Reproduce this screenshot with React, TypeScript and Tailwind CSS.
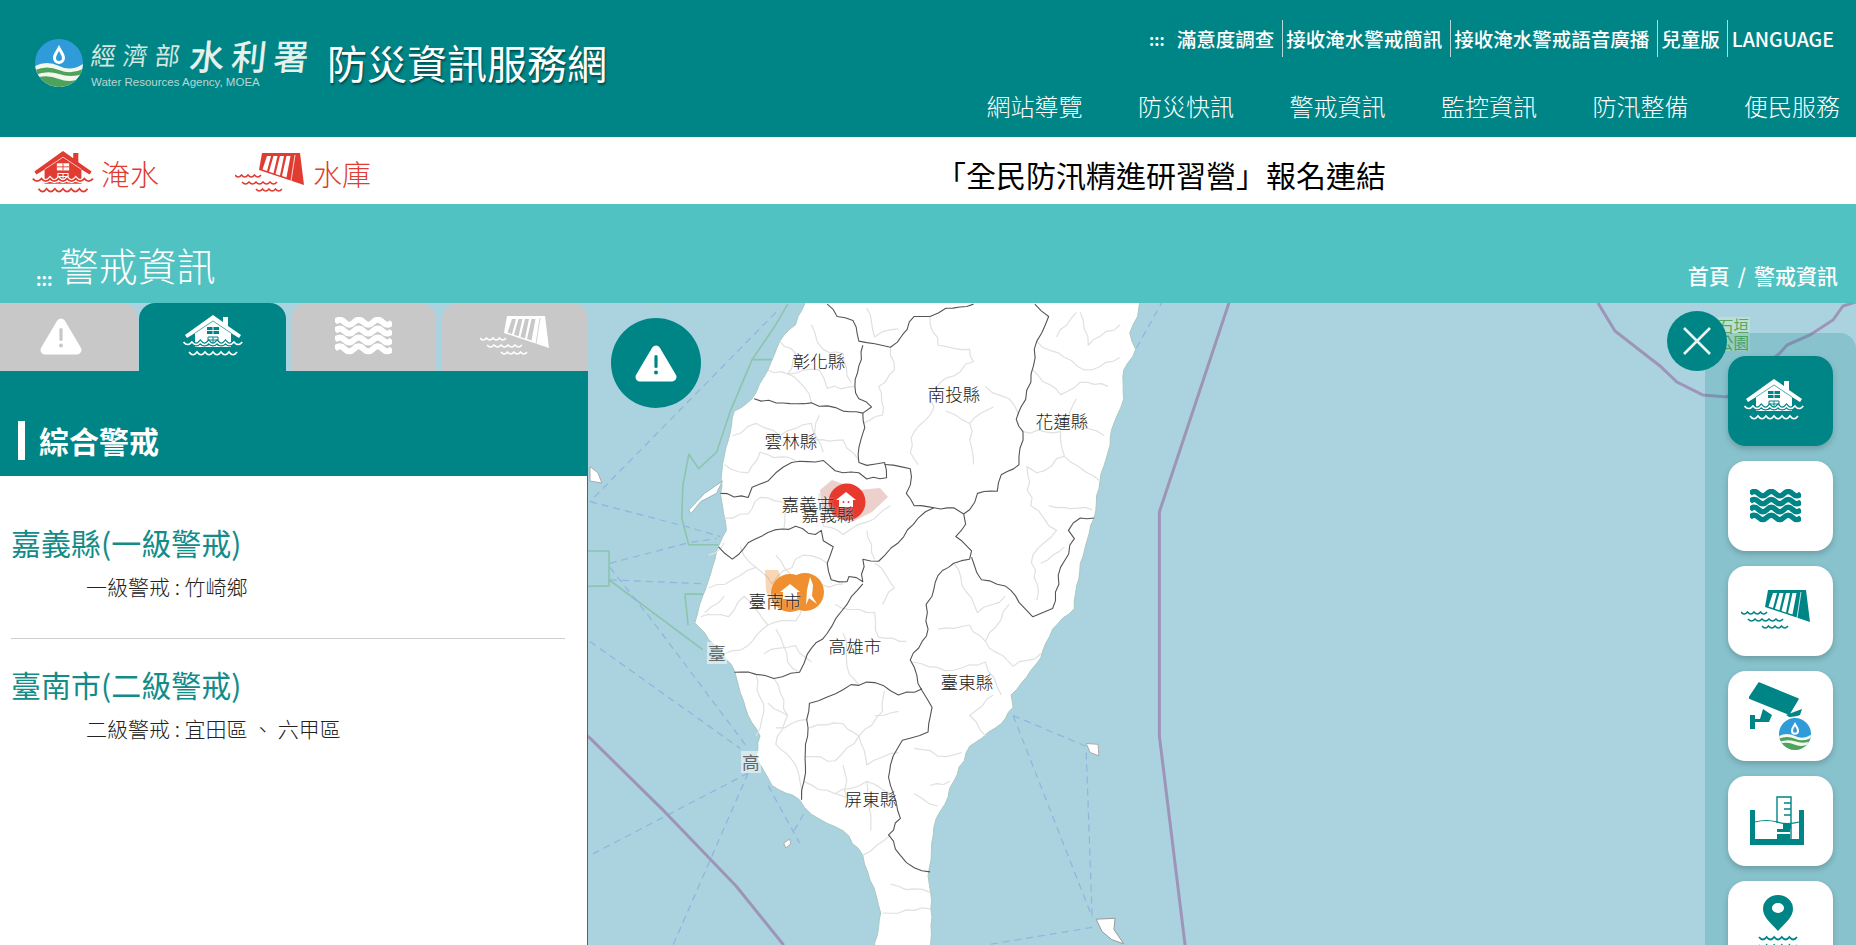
import { ReactNode } from "react";

const TEAL = "#008587";

// 波浪 path
const scallop = (x: number, y: number, n: number, w: number, d = 4) =>
  `M${x} ${y}` + Array.from({ length: n }, () => ` q${w / 2} ${d} ${w} 0`).join("");

// 把直線折成比較像行政界線的鋸齒
const wiggle = (d: string, amp = 4) => {
  let out = "";
  let px = 0;
  let py = 0;
  let seed = d.length;
  for (const m of d.matchAll(/([ML])(-?\d+) (-?\d+)/g)) {
    const x = Number(m[2]);
    const y = Number(m[3]);
    if (m[1] === "L") {
      const len = Math.hypot(x - px, y - py);
      const n = Math.max(1, Math.round(len / 20));
      for (let i = 1; i < n; i++) {
        seed += 1;
        const off = Math.sin(seed * 12.9898) * 43758.5453;
        const r = (off - Math.floor(off) - 0.5) * 2 * amp;
        const t = i / n;
        const ox = px + (x - px) * t + (-(y - py) / len) * r;
        const oy = py + (y - py) * t + ((x - px) / len) * r;
        out += ` L${ox.toFixed(1)} ${oy.toFixed(1)}`;
      }
    }
    out += ` ${m[1]}${x} ${y}`;
    px = x;
    py = y;
  }
  return d.trim().endsWith("Z") ? out + " Z" : out;
};

function HouseFlood({ bg, className }: { bg: string; className?: string }) {
  return (
    <svg viewBox="0 0 60 45" className={className} fill="none">
      <path d="M30 0 L40 7 V2 H45 V11 L58 20 L56 23 L48 18 V32 H12 V18 L4 23 L2 20 Z" fill="currentColor" />
      <path d="M12 18 L30 6 L48 18" stroke={bg} strokeWidth="0.7" />
      <rect x="24" y="12" width="12" height="7" fill={bg} />
      <path d="M30 12 V19 M24 15.5 H36" stroke="currentColor" strokeWidth="0.9" />
      <path d="M25 31 V22 H35 V31 M25 25 H35 M30 22 V31" stroke={bg} strokeWidth="1" />
      <path d={scallop(0.5, 27, 7, 8.4, 5)} stroke={bg} strokeWidth="4" />
      <path d={scallop(0.5, 27, 7, 8.4, 5)} stroke="currentColor" strokeWidth="1.7" />
      <path d={scallop(6, 37, 6, 8, 5.5)} stroke="currentColor" strokeWidth="1.7" />
    </svg>
  );
}

function Waves({ className }: { className?: string }) {
  return (
    <svg viewBox="0 0 58 38" className={className} fill="none" stroke="currentColor" strokeWidth="6.2">
      {[5, 14, 23, 32].map((y) => (
        <path key={y} d={`M0 ${y} q4.8 -5 9.67 0 t9.67 0 t9.67 0 t9.67 0 t9.67 0 t9.67 0`} />
      ))}
    </svg>
  );
}

function Dam({ bg, className }: { bg: string; className?: string }) {
  return (
    <svg viewBox="0 0 70 42" className={className} fill="none">
      <path d="M27 0 H65 L69 32 L24 17 Z" fill="currentColor" />
      {[0, 1, 2, 3].map((i) => (
        <path key={i} d={`M${32 + i * 6.5} 3 h4 l-4 ${15 + i * 2.2} l-4.5 -1.5 Z`} fill={bg} />
      ))}
      <path d="M60 2 L56 28" stroke={bg} strokeWidth="0.8" />
      <path d={scallop(0, 22, 4, 6.5, 4)} stroke="currentColor" strokeWidth="1.5" />
      <path d={scallop(7, 29, 5, 7, 4)} stroke="currentColor" strokeWidth="1.5" />
      <path d={scallop(21, 36, 4, 6.5, 4)} stroke="currentColor" strokeWidth="1.5" />
    </svg>
  );
}

function WraLogo({ id, className }: { id: string; className?: string }) {
  return (
    <svg viewBox="0 0 48 48" className={className}>
      <clipPath id={id}>
        <circle cx="24" cy="24" r="24" />
      </clipPath>
      <g clipPath={`url(#${id})`}>
        <rect width="48" height="48" fill="#2f9bd8" />
        <path d="M0 27 Q12 21 24 27 T48 25 V48 H0 Z" fill="#f3f7ee" />
        <path d="M0 31 Q12 26 24 31 T48 30 V35 Q36 39 24 35 T0 36 Z" fill="#4da25c" />
        <path d="M0 39 Q12 35 24 40 T48 38 V48 H0 Z" fill="#4da25c" />
      </g>
      <path d="M24 6 C27 12 30 15 30 19 A6 6 0 0 1 18 19 C18 15 21 12 24 6 Z" fill="#fff" />
      <path d="M24 12 C25.5 15 27 17 27 19 A3 3 0 0 1 21 19 C21 17 22.5 15 24 12 Z" fill="#2f9bd8" />
    </svg>
  );
}

function Camera({ className }: { className?: string }) {
  return (
    <svg viewBox="0 0 64 68" className={className} fill="currentColor">
      <path d="M0 16 L10 1 L49 17 L40 32 Z" stroke="currentColor" strokeWidth="1.5" strokeLinejoin="round" />
      <path d="M37 33 L53 27 L51 33 L42 36 Z" />
      <path d="M14 27 L23 33 L20 40 H6 V37 H11 Z" />
      <rect x="1" y="33" width="5" height="14" />
      <circle cx="46" cy="52" r="17.5" fill="#fff" />
      <g transform="translate(30 36)">
        <WraLogo id="cam-logo" className="w-[32px] h-[32px]" />
      </g>
    </svg>
  );
}

function Gauge({ className }: { className?: string }) {
  return (
    <svg viewBox="0 0 54 50" className={className} fill="none">
      <path d="M0 14 H5 V43 H49 V14 H54 V49 H0 Z" fill="currentColor" />
      <path d="M27 27 V1 H41 V43" stroke="currentColor" strokeWidth="1.4" />
      <path d="M34 7 H41 M34 13 H41 M34 19 H41" stroke="currentColor" strokeWidth="1.4" />
      <path d="M5 26 q11 -3 22 0 t22 0" stroke="currentColor" strokeWidth="1.2" />
      <path d="M27 33 H40 V36 H27 Z M27 38 H40 V43 H27 Z M33 28 H41 V33 H33 Z" fill="currentColor" />
    </svg>
  );
}

function PinWater({ className }: { className?: string }) {
  return (
    <svg viewBox="0 0 40 62" className={className} fill="none">
      <path
        fillRule="evenodd"
        d="M20 36 C12 27 5 22 5 14 A15 14 0 0 1 35 14 C35 22 28 27 20 36 Z M20 8 A6 5 0 1 0 20 18 A6 5 0 1 0 20 8 Z"
        fill="currentColor"
      />
      <path d={scallop(1, 42, 5, 7.6, 5)} stroke="currentColor" strokeWidth="1.8" />
      <path d={scallop(1, 50, 5, 7.6, 5)} stroke="currentColor" strokeWidth="1.8" />
    </svg>
  );
}

function AlertIcon({ bg, className }: { bg: string; className?: string }) {
  return (
    <svg viewBox="0 0 42 37" className={className}>
      <path d="M21 5 L37 32 H5 Z" fill="currentColor" stroke="currentColor" strokeWidth="9" strokeLinejoin="round" />
      <rect x="19.4" y="10" width="3.2" height="13" rx="1.6" fill={bg} />
      <circle cx="21" cy="27.5" r="2" fill={bg} />
    </svg>
  );
}

// 地圖座標是以地圖裁切範圍為準，下面再縮放回頁面像素
const COAST =
  "M1390 5 L1385 40 L1365 80 L1380 120 L1350 170 L1350 240 L1325 300 L1310 370 L1290 440 L1275 530 L1240 640 L1225 750 L1170 800 L1140 870 L1065 960 L1070 990 L1040 1030 L960 1085 L920 1170 L870 1280 L855 1400 L865 1500 L860 1580 L720 1580 L735 1490 L690 1350 L640 1290 L560 1250 L530 1215 L460 1180 L420 1110 L430 1060 L400 1010 L365 900 L335 860 L300 825 L265 785 L285 720 L320 610 L345 560 L335 500 L330 470 L335 400 L350 340 L365 270 L410 240 L450 170 L480 100 L520 60 L545 5 Z";

const COUNTY = [
  "M600 10 L625 40 L665 50 L680 100 L760 115 L790 85 L820 40 L860 40 L900 20 L970 10",
  "M1125 10 L1160 40 L1130 100 L1115 200 L1090 260 L1078 290 L1095 320 L1085 400 L1040 425 L1030 465 L980 470 L960 510 L945 520",
  "M415 240 L470 250 L560 250 L640 270 L690 275 L712 260 L680 240 L670 210 L680 160 L690 110",
  "M690 275 L695 310 L685 340 L680 395 L700 402 L745 395 L750 432 L700 435 L680 420 L620 415 L590 390 L510 395 L470 420 L450 440 L410 455 L400 480 L330 470",
  "M745 400 L810 410 L810 450 L800 470 L820 500 L870 505 L920 505 L945 520 L950 545 L925 575 L965 610 L960 630 L920 640 L880 670 L865 720 L850 740 L855 800 L840 830 L810 875 L840 950 L865 990 L855 1050 L790 1070 L760 1130 L755 1160 L785 1260 L755 1300 L785 1350 L820 1380 L860 1390",
  "M325 600 L360 630 L400 590 L450 565 L520 550 L570 570 L585 560 L590 585 L615 600 L600 640 L610 680 L650 685 L655 672 L690 685 L690 630 L730 635 L780 590 L830 530 L870 505",
  "M365 905 L420 910 L465 920 L530 905 L550 860 L600 810 L650 740 L690 690",
  "M535 1215 L545 1150 L545 1080 L555 980 L600 965 L660 935 L720 930 L780 960 L840 945",
  "M965 625 L990 680 L1050 695 L1085 735 L1120 770 L1170 750 L1190 650 L1225 580 L1210 560 L1240 530 L1275 530",
];

const TOWN = [
  "M480 100 L520 130 L500 180 L540 210 L560 250",
  "M560 60 L590 120 L640 130 L660 200",
  "M450 170 L500 180 L580 170 L600 215 L670 210",
  "M760 115 L770 170 L730 210 L740 280 L690 300",
  "M860 40 L880 110 L960 120 L970 150 L900 190 L860 220 L870 260 L820 320 L810 370 L830 400",
  "M1000 210 L1060 240 L1085 280",
  "M1120 170 L1190 230 L1240 200 L1310 210",
  "M1130 100 L1250 170 L1340 140",
  "M1095 320 L1190 320 L1200 380 L1130 420 L1105 405 L1115 500 L1180 560 L1120 620 L1130 730",
  "M1200 380 L1290 440",
  "M1160 500 L1270 510",
  "M360 330 L420 300 L480 330 L560 300 L590 370",
  "M340 400 L400 420 L430 370 L520 390",
  "M580 280 L570 340 L640 340 L680 390",
  "M340 530 L400 520 L430 480 L500 500 L490 560",
  "M580 470 L590 550 L640 570 L700 540 L760 500",
  "M700 560 L720 630",
  "M300 700 L360 680 L420 650 L460 690 L540 620 L600 640",
  "M280 770 L350 770 L390 720 L450 790 L520 780 L570 700 L640 690",
  "M340 860 L400 840 L450 790 M470 800 L500 880 L530 905",
  "M420 910 L440 1000 L420 1060",
  "M465 920 L500 1010 L470 1080 L520 1130 L535 1215",
  "M640 810 L650 890 L680 935",
  "M620 740 L720 760 L730 820 L800 830",
  "M720 640 L770 700 L740 740",
  "M880 800 L960 790 L1000 830 L1060 740",
  "M815 880 L920 900 L1000 880 L1040 960",
  "M1000 830 L1070 890 L1140 860",
  "M920 640 L980 760 L1050 720",
  "M555 1040 L640 1030 L680 1060 L740 1000 L745 950",
  "M545 1110 L620 1120 L680 1060 L700 1130 L780 1100",
  "M540 1170 L620 1200 L700 1170 L760 1200",
  "M690 1350 L760 1300",
  "M820 1090 L900 1110 L940 1100 M860 1180 L910 1170",
  "M760 1420 L860 1440 M740 1490 L860 1480",
  "M700 20 L720 90 L780 70",
  "M1240 30 L1260 110 L1340 60 M1230 30 L1180 90",
  "M1210 290 L1300 330 M1230 240 L1210 290",
  "M900 270 L960 300 L1020 260 M960 300 L970 400",
  "M1140 640 L1200 600",
  "M380 600 L420 650 M470 620 L520 680",
  "M300 620 L340 590 M290 760 L340 720",
  "M440 860 L520 840 L560 880",
  "M450 980 L500 1010 M470 1040 L550 1020",
  "M640 1130 L650 1210 L620 1200 M700 1170 L710 1290",
  "M820 1200 L880 1230 M780 1000 L720 1010",
  "M1020 960 L960 1010 L1000 1060",
];

const DASH = [
  "M470 30 L0 490",
  "M0 490 L240 550 L330 575",
  "M50 640 L250 590 L320 580",
  "M50 680 L290 690",
  "M50 650 L150 770 L400 1090",
  "M0 830 L380 1090",
  "M400 1150 L0 1350",
  "M400 1150 L210 1568",
  "M450 1180 L530 1320 M540 1250 L510 1300",
  "M1070 1010 L1255 1085 M1070 1010 L1270 1500 M1255 1100 L1270 1500 M1270 1525 L1000 1568",
  "M1450 0 L1380 120",
];

const GREEN = [
  "M500 10 L470 60 L410 145 L470 145 M410 145 L355 270 L320 370 L275 410 L250 375 L235 450 L232 530 L250 595 L325 595",
  "M-200 610 L48 610 L48 695 L-200 700 M48 680 L285 850 M240 715 L285 715 M240 715 L248 790",
];

const LABELS = [
  { t: "彰化縣", x: 819, y: 361 },
  { t: "南投縣", x: 954, y: 394 },
  { t: "花蓮縣", x: 1062, y: 421 },
  { t: "雲林縣", x: 791, y: 441 },
  { t: "嘉義市", x: 808, y: 504 },
  { t: "嘉義縣", x: 828, y: 514 },
  { t: "臺南市", x: 775, y: 601 },
  { t: "高雄市", x: 855, y: 646 },
  { t: "臺東縣", x: 967, y: 682 },
  { t: "屏東縣", x: 871, y: 799 },
];

function MapLabel({ t, x, y }: { t: string; x: number; y: number }) {
  return (
    <span
      className="absolute -translate-x-1/2 -translate-y-1/2 text-[17.6px] leading-none font-light text-[#222] whitespace-nowrap [text-shadow:0_0_2px_#fff]"
      style={{ left: x, top: y - 303 }}
    >
      {t}
    </span>
  );
}

function MapCanvas() {
  const scaled = "translate(590 300) scale(0.3954 0.4114)";
  return (
    <svg viewBox="0 303 1856 642" className="absolute inset-0 w-[1856px] h-[642px]" fill="none">
      <rect x="0" y="303" width="1856" height="642" fill="#aad3df" />
      <g transform={scaled} strokeLinejoin="round">
        {GREEN.map((d, i) => (
          <path key={i} d={d} stroke="#8cc4ae" strokeWidth="1.6" vectorEffect="non-scaling-stroke" />
        ))}
        {DASH.map((d, i) => (
          <path key={i} d={d} stroke="#90b4df" strokeWidth="1.2" strokeDasharray="7 5" vectorEffect="non-scaling-stroke" />
        ))}
        <path d="M-600 590 L0 1065 L190 1245 L370 1425 L490 1568" stroke="#9e94b8" strokeWidth="3" vectorEffect="non-scaling-stroke" />
        <path d="M1616 7 L1440 515 L1440 1060 L1505 1568" stroke="#9e94b8" strokeWidth="3" vectorEffect="non-scaling-stroke" />
        <path d={wiggle(COAST, 3)} fill="#fff" stroke="#a8c9c2" strokeWidth="1" vectorEffect="non-scaling-stroke" />
        <path d="M250 510 L290 470 L335 440 L320 470 L280 490 L255 520 Z" fill="#fff" stroke="#9bb" strokeWidth="1" vectorEffect="non-scaling-stroke" />
        <path d="M0 405 L20 420 L30 445 L0 440 Z" fill="#fff" stroke="#aaa" strokeWidth="1" vectorEffect="non-scaling-stroke" />
        <path d="M1255 1078 L1285 1080 L1287 1108 L1265 1100 Z" fill="#fff" stroke="#aaa" strokeWidth="1" vectorEffect="non-scaling-stroke" />
        <path d="M490 1320 L505 1310 L508 1322 L495 1332 Z" fill="#fff" stroke="#aaa" strokeWidth="1" vectorEffect="non-scaling-stroke" />
        <path d="M1280 1505 L1328 1503 L1325 1530 L1350 1565 L1320 1555 L1295 1535 Z" fill="#fff" stroke="#999" strokeWidth="1" vectorEffect="non-scaling-stroke" />
        {TOWN.map((d, i) => (
          <path key={i} d={wiggle(d, 6)} stroke="#e0e0e0" strokeWidth="1.2" vectorEffect="non-scaling-stroke" />
        ))}
        {COUNTY.map((d, i) => (
          <path key={i} d={wiggle(d, 4)} stroke="#555" strokeWidth="1.1" vectorEffect="non-scaling-stroke" />
        ))}
      </g>
      <path
        d="M1598 303 L1615 331 L1660 366 L1677 382 L1703 395 L1727 397 L1780 353 L1787 345 L1810 335 L1833 320 L1843 306 L1856 302"
        stroke="#9e94b8"
        strokeWidth="3"
      />
      {/* 警戒範圍 */}
      <path d="M820 490 L832 480 L860 490 L880 488 L888 497 L872 512 L852 522 L822 510 Z" fill="#c9786e" fillOpacity="0.35" />
      <path d="M765 570 L778 570 L786 590 L770 602 L766 590 Z" fill="#ef8b2c" fillOpacity="0.35" />
      <circle cx="847" cy="502" r="18.5" fill="#e8392f" />
      <circle cx="805" cy="592" r="19" fill="#ef8f2f" />
      <circle cx="790" cy="593" r="19" fill="#ef8f2f" />
      <path d="M846 492 L856 500 H853 V507 H839 V500 H836 Z" fill="#fff" />
      <circle cx="843.5" cy="502" r="1" fill="#e8392f" />
      <circle cx="848.5" cy="502" r="1" fill="#e8392f" />
      <path d="M790 584 L800 592 H797 V599 H783 V592 H780 Z" fill="#fff" />
      <path d="M810 577 L813 585 L812 596 L817 604 L809 598 L806 605 L807 590 Z" fill="#fff" />
    </svg>
  );
}

function SideButton({ active, children }: { active?: boolean; children: ReactNode }) {
  return (
    <div
      className={`w-[105px] h-[90px] shrink-0 rounded-[18px] flex items-center justify-center shadow-[0_3px_6px_rgba(0,0,0,0.2)] ${
        active ? "bg-[#008587] text-white" : "bg-white text-[#008587]"
      }`}
    >
      {children}
    </div>
  );
}

function Alert({ title, detail }: { title: string; detail: string }) {
  return (
    <div className="h-[116px]">
      <h3 className="text-[30px] leading-[40px] text-[#128c88]">{title}</h3>
      <p className="pl-[75px] mt-[10px] text-[21px] leading-[28px] font-light text-[#222]">{detail}</p>
    </div>
  );
}

export default function App() {
  return (
    <div className="w-[1856px] h-[945px] overflow-hidden bg-white font-['Noto_Sans_CJK_TC','Noto_Sans',sans-serif]">
      <header className="h-[137px] bg-[#008587] flex justify-between">
        <div className="flex items-start pl-[35px] pt-[39px]">
          <WraLogo id="head-logo" className="w-[48px] h-[48px] shrink-0" />
          <div className="ml-[8px] -mt-[4px] text-[#d4e6df]">
            <div className="flex items-center h-[38px] whitespace-nowrap">
              <span className="text-[25px] leading-none tracking-[7px] -skew-x-6">經濟部</span>
              <span className="ml-[3px] text-[35px] leading-none tracking-[7px] font-medium -skew-x-6 text-[#e6f1ec]">水利署</span>
            </div>
            <div className="text-[11.5px] leading-[14px] mt-[2px] font-['Liberation_Sans',sans-serif] text-[#b9d6d2]">
              Water Resources Agency, MOEA
            </div>
          </div>
          <div className="ml-[11px] mt-[1px] text-[40px] leading-[44px] text-white whitespace-nowrap [text-shadow:1px_2px_2px_rgba(0,50,50,0.7)]">
            防災資訊服務網
          </div>
        </div>
        <div className="flex flex-col items-end pr-[16px]">
          <div className="flex items-center h-[37px] mt-[20px] pr-[6px] text-[19.5px] font-medium text-white whitespace-nowrap">
            <span className="mr-[12px] text-[16px] font-bold">:::</span>
            <span className="pr-[8px] leading-[37px]">滿意度調查</span>
            <span className="px-[3px] border-l border-[#b9d6d6] leading-[37px] pr-[8px]">接收淹水警戒簡訊</span>
            <span className="px-[3px] border-l border-[#b9d6d6] leading-[37px] pr-[8px]">接收淹水警戒語音廣播</span>
            <span className="px-[3px] border-l border-[#b9d6d6] leading-[37px] pr-[7px]">兒童版</span>
            <span className="pl-[4px] border-l border-[#b9d6d6] leading-[37px]">LANGUAGE</span>
          </div>
          <nav className="flex gap-[55.5px] mt-[31px] text-[24px] leading-[36px] font-light text-white whitespace-nowrap">
            {["網站導覽", "防災快訊", "警戒資訊", "監控資訊", "防汛整備", "便民服務"].map((n) => (
              <a key={n}>{n}</a>
            ))}
          </nav>
        </div>
      </header>

      <div className="h-[67px] pt-[6px] flex items-center text-[#e03c31] whitespace-nowrap">
        <HouseFlood bg="#fff" className="ml-[32px] w-[62px] h-[46px]" />
        <span className="ml-[7px] text-[29px] leading-none font-light">淹水</span>
        <Dam bg="#fff" className="ml-[76px] w-[70px] h-[42px]" />
        <span className="ml-[8px] text-[29px] leading-none font-light">水庫</span>
        <span className="ml-[565px] text-[30px] leading-none text-black">「全民防汛精進研習營」報名連結</span>
      </div>

      <div className="h-[99px] bg-[#50c2c2] flex justify-between text-white whitespace-nowrap">
        <div className="flex items-end pl-[36px] pb-[17px]">
          <span className="text-[17px] leading-none font-bold -mb-[1px]">:::</span>
          <span className="ml-[7px] text-[39px] leading-[44px] font-light">警戒資訊</span>
        </div>
        <div className="flex pr-[18px] pt-[57px] text-[21px] leading-[28px] font-medium">
          <span>首頁</span>
          <span className="mx-[8px]">/</span>
          <span>警戒資訊</span>
        </div>
      </div>

      <main className="relative h-[642px] overflow-hidden">
        <MapCanvas />
        {LABELS.map((l) => (
          <MapLabel key={l.t} {...l} />
        ))}
        <span className="absolute left-[707px] top-[339px] px-[1px] bg-white/50 text-[17.6px] leading-[22px] text-[#666]">臺</span>
        <span className="absolute left-[741px] top-[448px] px-[1px] bg-white/50 text-[17.6px] leading-[22px] text-[#666]">高</span>
        <span className="absolute left-[1718px] top-[14px] w-[32px] text-[15.5px] leading-[17px] text-[#5aa85a] bg-[#cfe9c9]/50">石垣公園</span>

        <div className="relative z-10 w-[588px] h-full flex flex-col">
          <div className="flex h-[68px]">
            <div className="w-[138px] rounded-tr-[16px] bg-[#c8c8c8] text-white flex items-center justify-center">
              <AlertIcon bg="#c8c8c8" className="w-[42px] h-[37px] -mt-[2px] mr-[16px]" />
            </div>
            <div className="ml-[1px] w-[147px] rounded-t-[16px] bg-[#008587] text-white flex items-center justify-center">
              <HouseFlood bg={TEAL} className="w-[60px] h-[45px]" />
            </div>
            <div className="ml-[5px] w-[145px] rounded-t-[16px] bg-[#c8c8c8] text-white flex items-center justify-center">
              <Waves className="w-[57px] h-[38px] -mt-[2px]" />
            </div>
            <div className="ml-[6px] w-[146px] rounded-t-[16px] bg-[#c8c8c8] text-white flex items-center justify-center">
              <Dam bg="#c8c8c8" className="w-[70px] h-[42px]" />
            </div>
          </div>
          <div className="h-[105px] bg-[#008587] pl-[18px] pt-[50px]">
            <div className="flex items-center h-[39px] border-l-[7px] border-white pl-[14px] text-[30px] font-bold text-white">綜合警戒</div>
          </div>
          <div className="flex-1 bg-white border-r border-[#008587] pl-[11px] pr-[22px] pt-[46px]">
            <Alert title="嘉義縣(一級警戒)" detail="一級警戒 : 竹崎鄉" />
            <div className="h-px bg-[#cfcfcf] mb-[25px]" />
            <Alert title="臺南市(二級警戒)" detail="二級警戒 : 宜田區 、 六甲區" />
          </div>
        </div>

        <div className="absolute z-10 left-[611px] top-[15px] w-[90px] h-[90px] rounded-full bg-[#008587] text-white flex items-center justify-center">
          <AlertIcon bg={TEAL} className="w-[42px] h-[37px]" />
        </div>

        <aside className="absolute z-10 right-0 top-[30px] w-[151px] h-[612px] rounded-t-[16px] bg-[#008587]/20 pl-[23px] pt-[23px] flex flex-col gap-[15px]">
          <SideButton active>
            <HouseFlood bg={TEAL} className="w-[60px] h-[45px] mr-[14px]" />
          </SideButton>
          <SideButton>
            <Waves className="w-[51px] h-[34px] mr-[10px]" />
          </SideButton>
          <SideButton>
            <Dam bg="#fff" className="w-[70px] h-[42px] mr-[10px]" />
          </SideButton>
          <SideButton>
            <Camera className="w-[64px] h-[68px]" />
          </SideButton>
          <SideButton>
            <Gauge className="w-[54px] h-[50px] mr-[8px]" />
          </SideButton>
          <SideButton>
            <PinWater className="w-[40px] h-[62px] mr-[6px]" />
          </SideButton>
        </aside>

        <button className="absolute z-20 left-[1667px] top-[8px] w-[60px] h-[60px] rounded-full bg-[#008587] flex items-center justify-center">
          <svg viewBox="0 0 30 30" className="w-[30px] h-[30px]" stroke="#e6f4f2" strokeWidth="2.6">
            <path d="M2 2 L28 28 M28 2 L2 28" />
          </svg>
        </button>
      </main>
    </div>
  );
}
